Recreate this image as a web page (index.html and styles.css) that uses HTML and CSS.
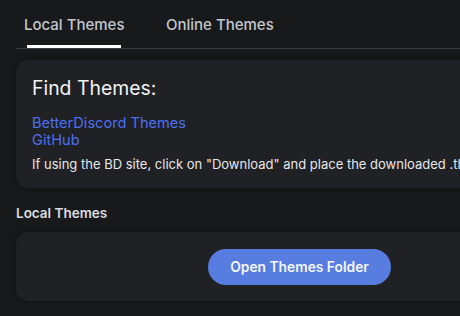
FILE: index.html
```html
<html>

<head>
    <meta charset="utf-8">
    <title>Themes</title>
    <link rel="stylesheet" href="styles.css">
</head>

<body>
    <div class="tabs">
        <div class="tab active">Local Themes</div>
        <div class="tab">Online Themes</div>
    </div>

    <div class="card find">
        <h2>Find Themes:</h2>
        <div class="links">
            <a href="#">BetterDiscord Themes</a>
            <a href="#">GitHub</a>
        </div>
        <p class="note">If using the BD site, click on "Download" and place the downloaded .theme.css file in the themes folder.</p>
    </div>

    <h3 class="section">Local Themes</h3>
    <div class="card local">
        <button>Open Themes Folder</button>
    </div>
</body>

</html>
```

FILE: styles.css
```css
html,
body {
    margin: 0;
    background: #18191b;
    overflow: hidden;
}

body {
    width: 520px;
    padding: 0 0 0 16px;
    font-family: Inter, sans-serif;
    color: #dcdde0;
}

.tabs {
    display: flex;
    gap: 16px;
    height: 48px;
    border-bottom: 1px solid #3b3c3f;
}

.tab {
    position: relative;
    padding: 15px 8px 0 8px;
    width: 110px;
    font-size: 15px;
    font-weight: 500;
    color: #c3c6cc;
}

.tab.active::after {
    content: "";
    position: absolute;
    left: 11px;
    width: 94px;
    bottom: 0;
    height: 3px;
    background: #ffffff;
}

.card {
    background: #202124;
    border-radius: 12px;
    box-shadow: 0 0 6px rgba(0, 0, 0, .35);
}

.find {
    margin-top: 11px;
    padding: 16px 16px 16px 16px;
    height: 96px;
    overflow: hidden;
}

.find h2 {
    margin: 0 0 15px 0;
    font-size: 19.4px;
    font-weight: 400;
    color: #f1f2f4;
    line-height: 24px;
}

.links a {
    display: block;
    color: #4c6ff0;
    text-decoration: none;
    font-size: 14.6px;
    line-height: 17px;
}

.note {
    margin: 7px 0 0 0;
    font-size: 13px;
    line-height: 16px;
    white-space: nowrap;
    color: #e6e7ea;
}

.section {
    margin: 16px 0 10px 0;
    font-size: 13.5px;
    font-weight: 600;
    color: #dcdde0;
    line-height: 18px;
}

.local {
    height: 69px;
    display: flex;
    align-items: center;
    padding-left: 192px;
}

button {
    width: 183px;
    height: 36px;
    border: none;
    border-radius: 18px;
    background: #587de0;
    color: #f4f6fb;
    font-family: Inter, sans-serif;
    font-size: 13.8px;
    font-weight: 600;
    cursor: pointer;
}
```
